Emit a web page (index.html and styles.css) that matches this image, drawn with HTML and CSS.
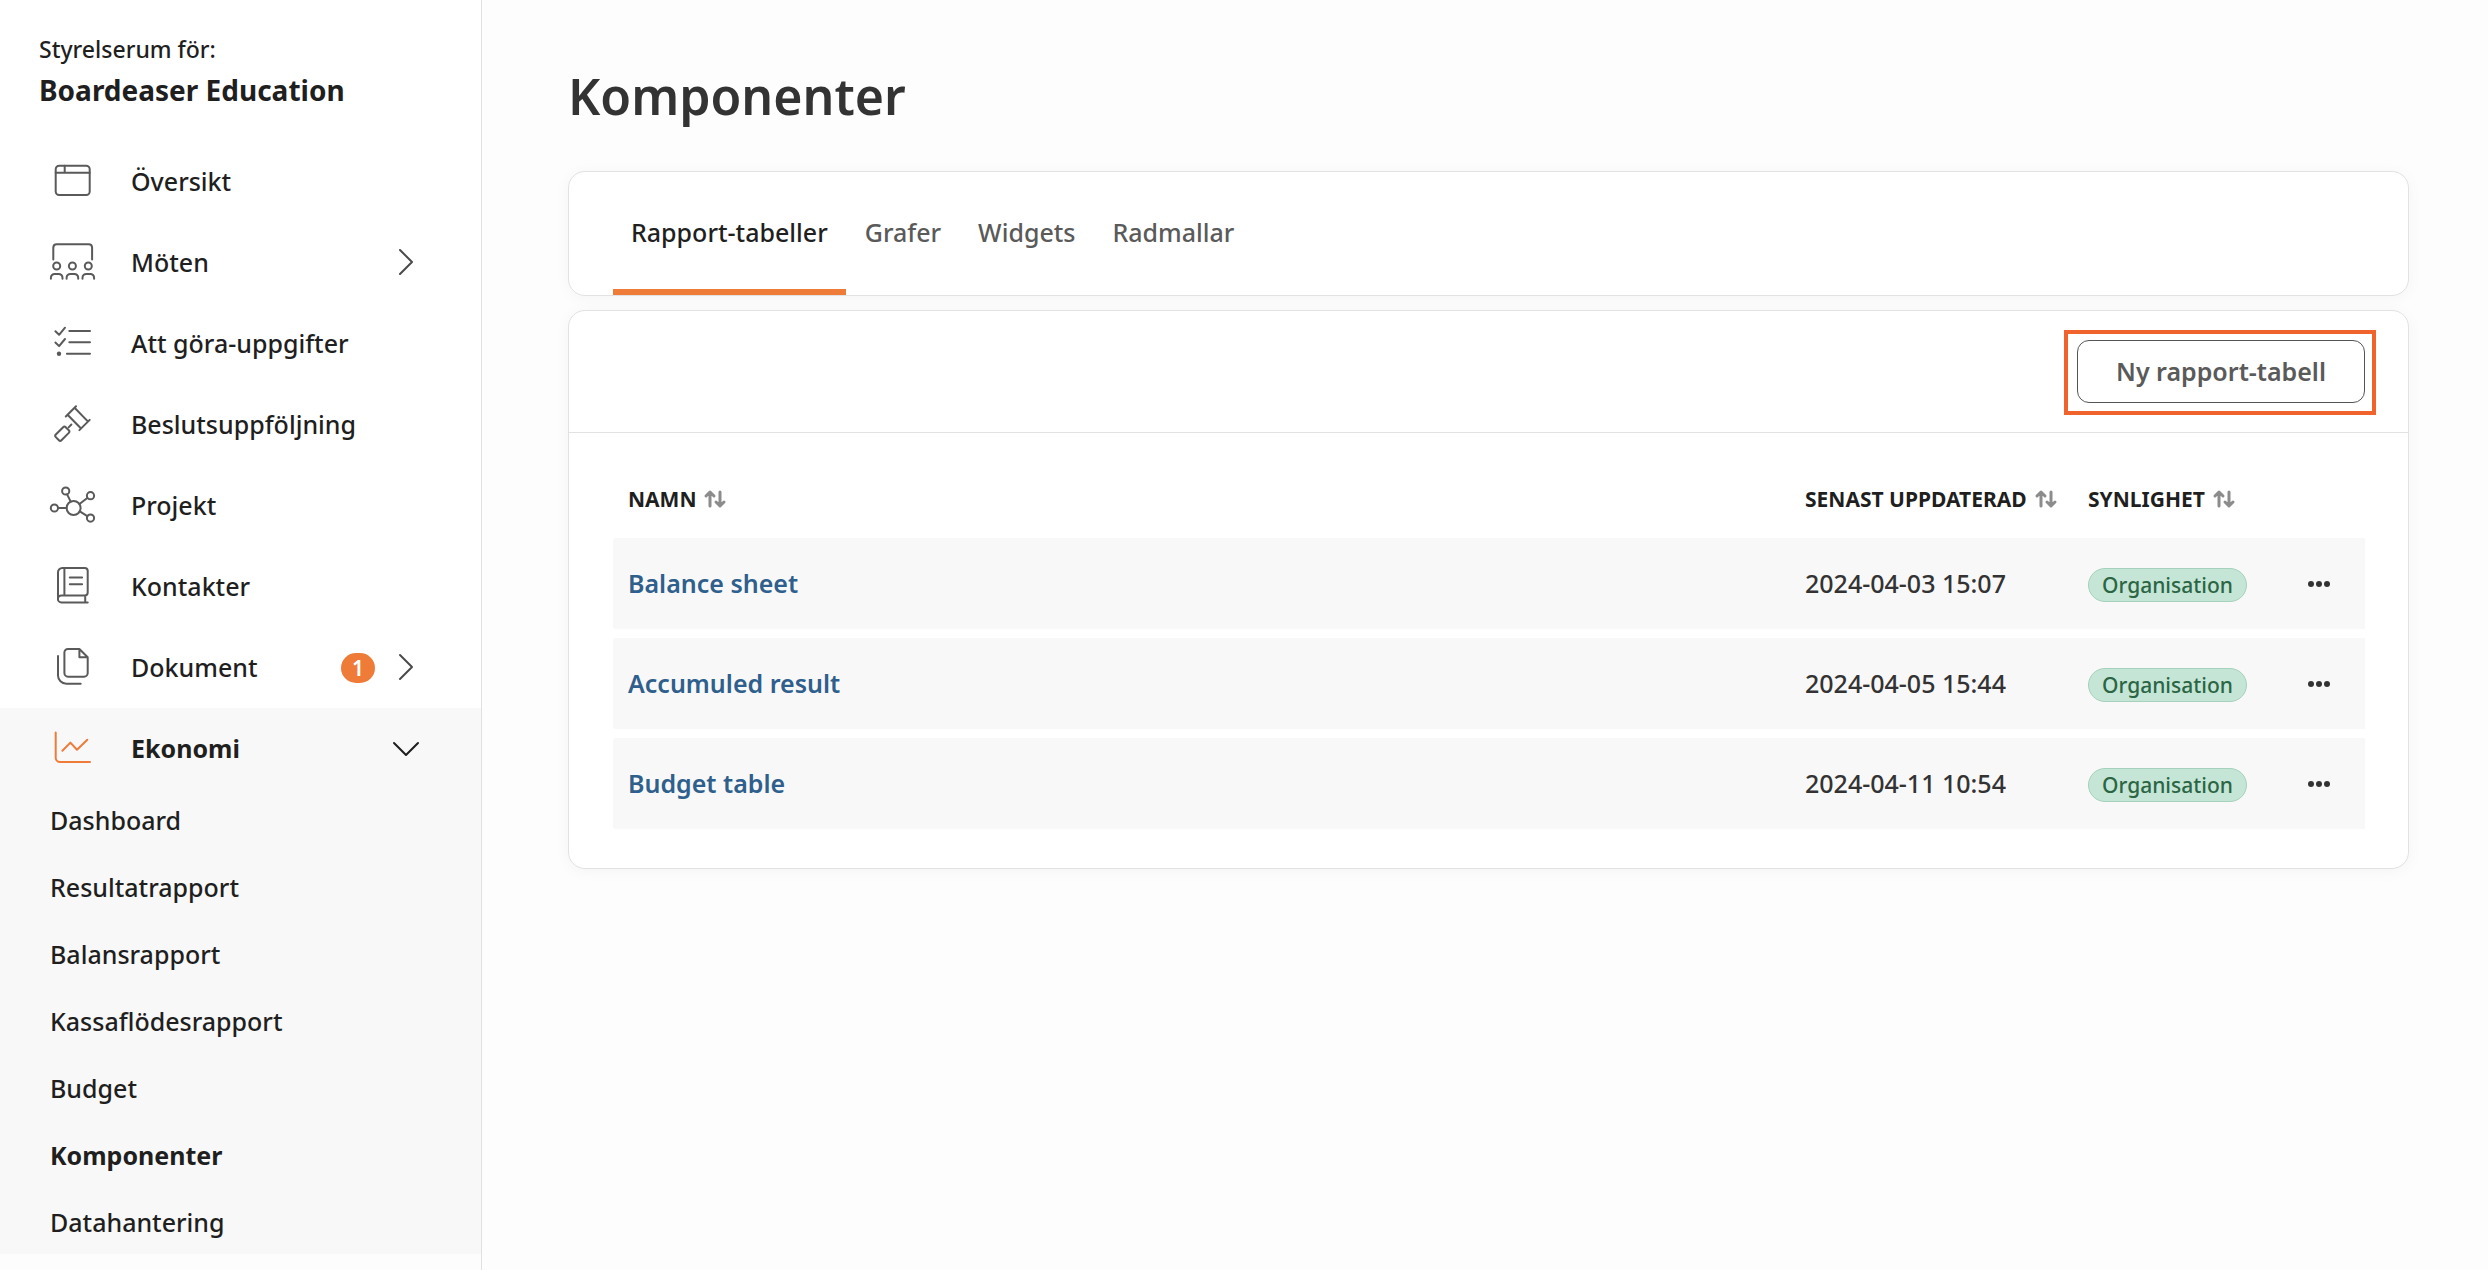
FILE: index.html
```html
<!DOCTYPE html>
<html lang="sv">
<head>
<meta charset="utf-8">
<meta name="viewport" content="width=device-width, initial-scale=1">
<title>Komponenter – Boardeaser Education</title>
<link rel="stylesheet" href="styles.css">
</head>
<body>
<div class="layout">
  <aside class="sidebar">
    <div class="sidebar-panel">
      <header class="org">
        <p class="org-label">Styrelserum för:</p>
        <p class="org-name">Boardeaser Education</p>
      </header>
      <nav aria-label="Huvudmeny">
        <ul class="menu">
          <li><a class="menu-link" href="#oversikt">
            <svg class="icon" viewBox="0 0 48 49" aria-hidden="true"><rect x="7.7" y="8.7" width="34" height="29.3" rx="3.5"/><path d="M7.7 15.8h34M16.7 8.7v7"/></svg>
            <span class="menu-text">Översikt</span></a></li>
          <li><a class="menu-link" href="#moten">
            <svg class="icon" viewBox="0 0 48 49" aria-hidden="true"><path d="M5.3 21.6V9.6a3.4 3.4 0 0 1 3.4-3.3h32a3.4 3.4 0 0 1 3.4 3.3v12"/><circle cx="8.7" cy="28" r="3.5"/><circle cx="24.4" cy="28" r="3.5"/><circle cx="40.3" cy="28" r="3.5"/><path d="M2.9 40.7v-1a3.8 3.8 0 0 1 3.8-3.8h4a3.8 3.8 0 0 1 3.8 3.8v1M18.6 40.7v-1a3.8 3.8 0 0 1 3.8-3.8h4a3.8 3.8 0 0 1 3.8 3.8v1M34.5 40.7v-1a3.8 3.8 0 0 1 3.8-3.8h4a3.8 3.8 0 0 1 3.8 3.8v1"/></svg>
            <span class="menu-text">Möten</span>
            <svg class="chevron" viewBox="0 0 26 26" aria-hidden="true"><path d="M7 0l12 12L7 24"/></svg></a></li>
          <li><a class="menu-link" href="#uppgifter">
            <svg class="icon" viewBox="0 0 48 49" aria-hidden="true"><path d="M21.3 12H42M21.3 23.3H42M18.9 34.7H42M7.4 12.2l3.7 3.6L17 8.7M7.4 23.5l3.7 3.6L17 20"/><circle class="fill" cx="11" cy="34.7" r="2.2"/></svg>
            <span class="menu-text">Att göra-uppgifter</span></a></li>
          <li><a class="menu-link" href="#beslut">
            <svg class="icon" viewBox="0 0 48 49" aria-hidden="true"><path d="M17.8 16.5L28 6.3M31.4 30.1L41.7 19.9M19.8 15l13 13.3M26.8 8l13 13.4M23.4 24.5L20.6 27.4"/><rect x="7.3" y="29.7" width="14" height="8" rx="1.8" transform="rotate(-45 14.3 33.7)"/></svg>
            <span class="menu-text">Beslutsuppföljning</span></a></li>
          <li><a class="menu-link" href="#projekt">
            <svg class="icon" viewBox="0 0 48 49" aria-hidden="true"><circle cx="25.6" cy="27" r="7"/><circle cx="6.4" cy="27" r="3.6"/><circle cx="17.7" cy="10" r="3.6"/><circle cx="42.5" cy="14.7" r="3.6"/><circle cx="42.5" cy="37.1" r="3.6"/><path d="M10 27h8.6M19.1 13.4l3.6 7.2M31.5 23l7.8-6M31.8 30.4l7.5 4.8"/></svg>
            <span class="menu-text">Projekt</span></a></li>
          <li><a class="menu-link" href="#kontakter">
            <svg class="icon" viewBox="0 0 48 49" aria-hidden="true"><path d="M10 37V10.3A4.3 4.3 0 0 1 14.3 6h22.4a3 3 0 0 1 3 3v21.4a3 3 0 0 1-3 3H13.4a3.5 3.5 0 0 0 0 7h26.3M16.4 6v27M37.2 33.5v7M21.8 15.4h12.3M21.8 22.3h12.3"/></svg>
            <span class="menu-text">Kontakter</span></a></li>
          <li><a class="menu-link" href="#dokument">
            <svg class="icon" viewBox="0 0 48 49" aria-hidden="true"><path d="M31.4 6H20a3.6 3.6 0 0 0-3.6 3.6v20.5a3.6 3.6 0 0 0 3.6 3.6h16.1a3.6 3.6 0 0 0 3.6-3.6V14.2zM31.4 6v8.2h8.3M10 13v19.4a8.3 8.3 0 0 0 8.3 8.3h14.4"/></svg>
            <span class="menu-text">Dokument</span>
            <span class="count">1</span>
            <svg class="chevron" viewBox="0 0 26 26" aria-hidden="true"><path d="M7 0l12 12L7 24"/></svg></a></li>
          <li class="open"><a class="menu-link active" href="#ekonomi">
            <svg class="icon" viewBox="0 0 48 49" aria-hidden="true"><path d="M7.7 8.5v25.2A4.4 4.4 0 0 0 12.1 38H42M14.4 26.8l8-8.2 6.6 7.1 10.3-10"/></svg>
            <span class="menu-text">Ekonomi</span>
            <svg class="chevron" viewBox="0 0 26 26" aria-hidden="true"><path d="M1 7l12 12L25 7"/></svg></a>
            <ul class="submenu">
              <li><a href="#dashboard">Dashboard</a></li>
              <li><a href="#resultatrapport">Resultatrapport</a></li>
              <li><a href="#balansrapport">Balansrapport</a></li>
              <li><a href="#kassaflodesrapport">Kassaflödesrapport</a></li>
              <li><a href="#budget">Budget</a></li>
              <li><a class="current" href="#komponenter" aria-current="page">Komponenter</a></li>
              <li><a href="#datahantering">Datahantering</a></li>
            </ul>
          </li>
        </ul>
      </nav>
    </div>
  </aside>

  <main class="content">
    <h1 class="title">Komponenter</h1>
    <nav class="card tabs" aria-label="Komponenttyper">
      <a class="tab selected" href="#rapport-tabeller">Rapport-tabeller</a>
      <a class="tab" href="#grafer">Grafer</a>
      <a class="tab" href="#widgets">Widgets</a>
      <a class="tab" href="#radmallar">Radmallar</a>
    </nav>
    <section class="card">
      <div class="toolbar">
        <div class="highlight"><button class="button" type="button">Ny rapport-tabell</button></div>
      </div>
      <div class="table-area">
        <table class="reports">
          <colgroup><col><col class="col-date"><col class="col-scope"><col class="col-actions"></colgroup>
          <thead>
            <tr>
              <th scope="col"><button class="sort" type="button">NAMN <svg viewBox="0 0 20 18" aria-hidden="true"><path d="M5 16V2M1 6l4-4 4 4M15 2v14M11 12l4 4 4-4"/></svg></button></th>
              <th scope="col"><button class="sort" type="button">SENAST UPPDATERAD <svg viewBox="0 0 20 18" aria-hidden="true"><path d="M5 16V2M1 6l4-4 4 4M15 2v14M11 12l4 4 4-4"/></svg></button></th>
              <th scope="col"><button class="sort" type="button">SYNLIGHET <svg viewBox="0 0 20 18" aria-hidden="true"><path d="M5 16V2M1 6l4-4 4 4M15 2v14M11 12l4 4 4-4"/></svg></button></th>
              <td></td>
            </tr>
          </thead>
          <tbody>
            <tr>
              <td><a class="report" href="#balance-sheet">Balance sheet</a></td>
              <td>2024-04-03 15:07</td>
              <td><span class="pill">Organisation</span></td>
              <td><button class="more" type="button" aria-label="Fler val"><svg viewBox="0 0 24 8" aria-hidden="true"><circle cx="4" cy="4" r="3"/><circle cx="12" cy="4" r="3"/><circle cx="20" cy="4" r="3"/></svg></button></td>
            </tr>
            <tr>
              <td><a class="report" href="#accumuled-result">Accumuled result</a></td>
              <td>2024-04-05 15:44</td>
              <td><span class="pill">Organisation</span></td>
              <td><button class="more" type="button" aria-label="Fler val"><svg viewBox="0 0 24 8" aria-hidden="true"><circle cx="4" cy="4" r="3"/><circle cx="12" cy="4" r="3"/><circle cx="20" cy="4" r="3"/></svg></button></td>
            </tr>
            <tr>
              <td><a class="report" href="#budget-table">Budget table</a></td>
              <td>2024-04-11 10:54</td>
              <td><span class="pill">Organisation</span></td>
              <td><button class="more" type="button" aria-label="Fler val"><svg viewBox="0 0 24 8" aria-hidden="true"><circle cx="4" cy="4" r="3"/><circle cx="12" cy="4" r="3"/><circle cx="20" cy="4" r="3"/></svg></button></td>
            </tr>
          </tbody>
        </table>
      </div>
    </section>
  </main>
</div>
</body>
</html>
```
FILE: styles.css
```css
*,
*::before,
*::after {
  box-sizing: border-box;
}

body {
  margin: 0;
  background: #fdfdfd;
  color: #1f1f1f;
  font-family: "Noto Sans", "Open Sans", sans-serif;
  font-size: 25px;
  font-weight: 500;
  line-height: 33px;
}

a {
  color: inherit;
  text-decoration: none;
}

button {
  font: inherit;
  color: inherit;
  cursor: pointer;
}

ul {
  margin: 0;
  padding: 0;
  list-style: none;
}

svg {
  display: block;
  flex: none;
  overflow: visible;
  fill: none;
  stroke: currentColor;
  stroke-linecap: round;
  stroke-linejoin: round;
}

.layout {
  display: flex;
  min-height: 100vh;
}

/* Sidebar */

.sidebar {
  flex: none;
  width: 482px;
  border-right: 1px solid #e0e0e0;
}

.sidebar-panel {
  background: #fff;
}

.org {
  padding: 32px 39px 27px;
}

.org p {
  margin: 0;
}

.org-label {
  font-size: 23px;
  line-height: 34px;
}

.org-name {
  font-size: 28px;
  font-weight: 700;
  line-height: 48px;
}

.menu-link {
  display: flex;
  align-items: center;
  height: 81px;
  padding: 0 62px 0 48px;
}

.menu-text {
  flex: 1;
  margin-left: 35px;
}

.icon {
  width: 48px;
  height: 49px;
  color: #5a5a5a;
  stroke-width: 2;
}

.icon .fill {
  fill: currentColor;
  stroke: none;
}

.chevron {
  width: 26px;
  height: 26px;
  color: #4a4a4a;
  stroke-width: 2;
}

.count {
  width: 34px;
  margin-right: 18px;
  border-radius: 15px;
  background: #ef7b39;
  color: #fff;
  font-size: 21px;
  font-weight: 600;
  line-height: 30px;
  text-align: center;
}

.open {
  background: #f8f8f8;
}

.active {
  font-weight: 700;
}

.active .icon {
  color: #ef7b39;
}

.active .chevron {
  color: #1f1f1f;
}

.submenu {
  display: flex;
  flex-direction: column;
  gap: 34px;
  padding: 15px 50px 16px;
}

.submenu li:last-child {
  margin-bottom: -1px;
}

.submenu a {
  display: block;
}

.submenu .current {
  font-weight: 700;
}

/* Main content */

.content {
  flex: 1;
  min-width: 0;
  padding: 61px 79px 40px 86px;
}

.title {
  margin: 0 0 40px;
  color: #333;
  font-size: 50px;
  font-weight: 600;
  line-height: 70px;
}

.card {
  border: 1px solid #e2e2e2;
  border-radius: 17px;
  background: #fff;
  box-shadow: 0 2px 16px rgba(0, 0, 0, 0.04);
}

.tabs {
  display: flex;
  gap: 1px;
  margin-bottom: 14px;
  padding-left: 44px;
}

.tab {
  padding: 44px 18px 40px;
  border-bottom: 6px solid transparent;
  color: #5a5a5a;
}

.tab.selected {
  border-color: #ef7b39;
  color: #1f1f1f;
}

.toolbar {
  display: flex;
  justify-content: flex-end;
  padding: 19px 32px 17px;
  border-bottom: 1px solid #e2e2e2;
}

.highlight {
  padding: 6px 7px 8px 9px;
  border: 4px solid #f0632c;
}

.button {
  display: block;
  height: 63px;
  padding: 0 38px;
  border: 1px solid #555;
  border-radius: 12px;
  background: #fff;
  color: #5a5a5a;
  font-weight: 600;
}

.table-area {
  padding: 27px 43px 30px 44px;
}

.reports {
  width: 100%;
  border-spacing: 0 9px;
  table-layout: fixed;
}

.col-date {
  width: 283px;
}

.col-scope {
  width: 200px;
}

.col-actions {
  width: 92px;
}

.reports th,
.reports td {
  padding: 0 0 0 15px;
  text-align: left;
  white-space: nowrap;
}

.reports thead tr {
  height: 60px;
}

.sort {
  display: flex;
  align-items: center;
  gap: 9px;
  padding: 0;
  border: 0;
  background: none;
  font-size: 21px;
  font-weight: 700;
}

.sort svg {
  width: 20px;
  height: 18px;
  color: #8c8c8c;
  stroke-width: 3;
}

.reports tbody tr {
  height: 91px;
}

.reports tbody td {
  background: #f8f8f8;
  color: #333;
}

.reports tbody td:first-child {
  border-radius: 3px 0 0 3px;
}

.reports tbody td:last-child {
  padding: 0;
}

.report {
  color: #2f5f8c;
  font-weight: 600;
}

.pill {
  display: inline-block;
  padding: 0 13px;
  border: 1px solid #a6d1bc;
  border-radius: 17px;
  background: #c5e5d6;
  color: #2b6544;
  font-size: 21px;
  line-height: 32px;
  vertical-align: middle;
}

.more {
  display: block;
  margin: 0 auto;
  padding: 8px 0;
  border: 0;
  background: none;
}

.more svg {
  width: 24px;
  height: 8px;
  fill: #333;
  stroke: none;
}
```
